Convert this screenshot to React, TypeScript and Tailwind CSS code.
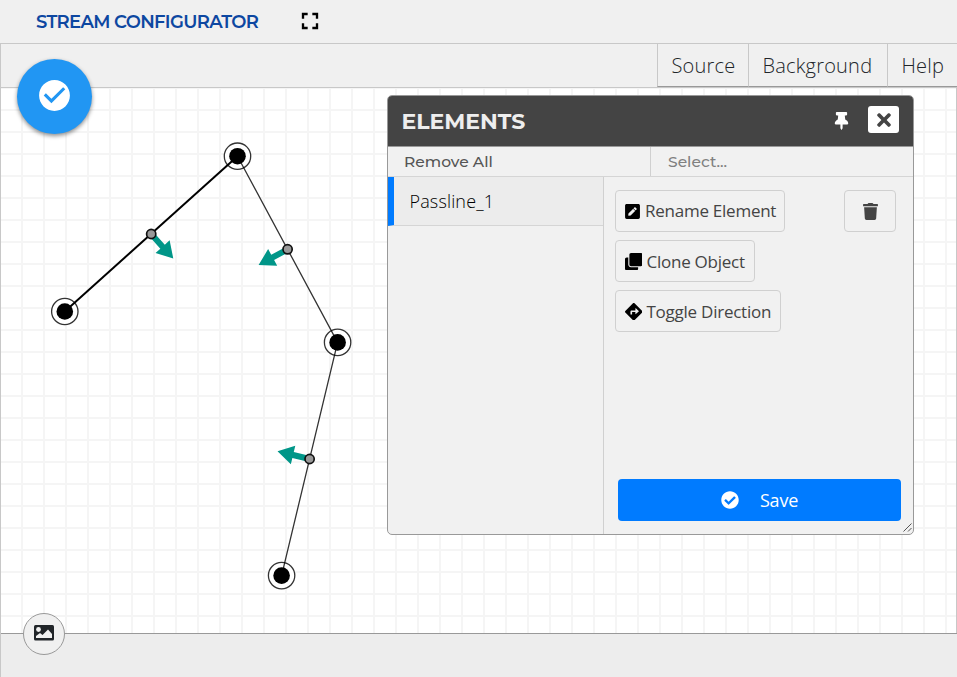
import React from "react";
import {
  MdFullscreen,
  MdCheckCircle,
} from "react-icons/md";
import {
  FaThumbtack,
  FaTimes,
  FaPenSquare,
  FaClone,
  FaDirections,
  FaTrash,
  FaCheckCircle,
} from "react-icons/fa";

type Point = { x: number; y: number };

const nodes: Point[] = [
  { x: 64.8, y: 311.5 },
  { x: 237.5, y: 156.2 },
  { x: 337.6, y: 342.4 },
  { x: 281.6, y: 575.6 },
];

const arrows: { from: Point; angle: number }[] = [
  { from: { x: 151.2, y: 234 }, angle: 48 },
  { from: { x: 287.6, y: 249.3 }, angle: 151.5 },
  { from: { x: 309.6, y: 459 }, angle: 193.5 },
];

function Drawing() {
  return (
    <svg className="block" width="955" height="545" viewBox="1 88 955 545">
      {nodes.map((n) => (
        <g key={n.y}>
          <circle cx={n.x} cy={n.y} r="13.2" fill="#fff" stroke="#333" strokeWidth="1.3" />
          <circle cx={n.x} cy={n.y} r="8.3" fill="#000" />
        </g>
      ))}
      <path d="M64.8 311.5L237.5 156.2" stroke="#000" strokeWidth="2" />
      <path d="M237.5 156.2L337.6 342.4L281.6 575.6" fill="none" stroke="#000" strokeOpacity="0.8" strokeWidth="1.3" />
      {arrows.map((a) => (
        <g key={a.angle}>
          <path
            transform={`translate(${a.from.x} ${a.from.y}) rotate(${a.angle})`}
            d="M0 -3H17V-9.5L33 0L17 9.5V3H0Z"
            fill="#009688"
          />
          <circle cx={a.from.x} cy={a.from.y} r="4.6" fill="#999" stroke="#111" strokeWidth="1.7" />
        </g>
      ))}
    </svg>
  );
}

const actionClass =
  "flex h-[42px] items-center rounded-[4px] border border-[#d0d0d0] text-[17px] tracking-[-0.25px] text-[#444] whitespace-nowrap";

const navClass =
  "flex h-[43px] items-center border-b border-l border-b-[#999] border-l-[#c8c8c8] pl-[13.5px] pt-[2px] font-light tracking-[0.2px]";

function ElementsPanel() {
  return (
    <section className="absolute left-[387px] top-[95px] flex h-[440px] w-[527px] flex-col overflow-hidden rounded-[5px] border border-[#999] bg-[#f0f0f0]/95">
      <header className="flex h-[51px] shrink-0 items-center border-b border-[#999] bg-[#444] pl-[13.5px] pr-[14px]">
        <h2 className="pt-[2px] font-['Montserrat','Open_Sans',sans-serif] text-[22px] font-bold leading-none text-[#eee]">
          ELEMENTS
        </h2>
        <FaThumbtack className="ml-auto h-[18px] w-[15px] text-white" />
        <button className="mb-[3px] ml-[19px] flex h-[27px] w-[31px] items-center justify-center rounded-[3px] bg-white text-[#444]">
          <FaTimes className="size-[20px]" />
        </button>
      </header>
      <div className="flex h-[30px] shrink-0 border-b border-[#d5d5d5] font-['Montserrat','Open_Sans',sans-serif] text-[15.5px] font-medium">
        <div className="flex w-[263px] items-center border-r border-[#d0d0d0] pl-[16px] pt-[1px] text-[#555]">
          Remove All
        </div>
        <div className="flex items-center pl-[17px] pt-[1px] text-[#808080]">
          Select...
        </div>
      </div>
      <div className="flex min-h-0 flex-1">
        <aside className="w-[216px] border-r border-[#d0d0d0]">
          <div className="flex h-[49px] items-center border-b border-l-[6px] border-b-[#d5d5d5] border-l-[#007bff] bg-[#ececec] pl-[15.5px] text-[18px] font-light tracking-[0.15px] text-black">
            Passline_1
          </div>
        </aside>
        <main className="flex flex-1 flex-col pb-[13px] pl-[11px] pr-[12px] pt-[13px]">
          <div className="flex items-start justify-between pr-[5px]">
            <div className="flex flex-col items-start gap-[8px]">
              <button className={`${actionClass} pl-[8px] pr-[8px]`}>
                <FaPenSquare className="mr-[4px] size-[17px] text-black" />
                Rename Element
              </button>
              <button className={`${actionClass} pl-[8.5px] pr-[9px] pt-[1px]`}>
                <FaClone className="mr-[4.5px] size-[17.5px] text-black" />
                Clone Object
              </button>
              <button className={`${actionClass} pl-[8.5px] pr-[9px] pt-[1px]`}>
                <FaDirections className="mr-[4.5px] size-[17.5px] text-black" />
                Toggle Direction
              </button>
            </div>
            <button className={`${actionClass} w-[52px] justify-center`}>
              <FaTrash className="size-[17px]" />
            </button>
          </div>
          <button className="ml-[3px] mt-auto flex h-[42px] items-center justify-center rounded-[4px] bg-[#007bff] text-[18px] tracking-[-0.2px] text-white">
            <FaCheckCircle className="mr-[21px] size-[18px]" />
            Save
          </button>
        </main>
      </div>
      <svg className="absolute bottom-[2px] right-[1px]" width="9" height="9" viewBox="0 0 9 9">
        <path d="M0.5 8.5L8.5 0.5M5 8.5L8.5 5" stroke="#555" strokeWidth="1" />
      </svg>
    </section>
  );
}

export default function App() {
  return (
    <div className="relative flex h-[677px] w-[957px] flex-col overflow-hidden bg-[#f0f0f0] font-['Open_Sans',sans-serif]">
      <header className="flex h-[43px] shrink-0 items-center pl-[36px]">
        <h1 className="w-[260px] whitespace-nowrap pt-[1px] font-['Montserrat','Open_Sans',sans-serif] text-[18px] font-semibold tracking-[-0.68px] text-[#0d47a1]">
          STREAM CONFIGURATOR
        </h1>
        <MdFullscreen className="mb-[1px] size-[28px] text-black" />
      </header>
      <div className="flex min-h-0 flex-1 flex-col border-l border-t border-[#c8c8c8]">
        <nav className="flex h-[44px] shrink-0 justify-end border-b border-[#c8c8c8] text-[20px] text-[#212529]">
          <button className={`${navClass} w-[91px]`}>Source</button>
          <button className={`${navClass} w-[139px]`}>Background</button>
          <button className={`${navClass} w-[70px]`}>Help</button>
        </nav>
        <div className="h-[545px] shrink-0 border-r border-[#c8c8c8] bg-white bg-[linear-gradient(to_right,#f5f5f5_2px,transparent_2px),linear-gradient(to_bottom,#f5f5f5_2px,transparent_2px)] bg-size-[22px_22px] bg-position-[20px_21px]">
          <Drawing />
        </div>
        <footer className="flex-1 border-t border-[#999] bg-[#ededed]" />
      </div>
      <button className="absolute left-[17px] top-[59px] flex size-[75px] items-center justify-center rounded-full bg-[#2196f3] pb-[2px] text-white shadow-[0_2px_4px_rgba(0,0,0,0.45)]">
        <MdCheckCircle className="size-[37px]" />
      </button>
      <ElementsPanel />
      <button className="absolute left-[23px] top-[613px] flex size-[42px] items-center justify-center rounded-full border border-[#999] bg-[#f0f0f0] pb-[3px]">
        <svg width="20" height="16" viewBox="0 0 20 16">
          <rect width="20" height="15.5" rx="1.5" fill="#212529" />
          <circle cx="4.5" cy="4.5" r="2.4" fill="#f0f0f0" />
          <path d="M2 13V11L6 8L8.5 10L14 4.5L18 9V13Z" fill="#f0f0f0" />
        </svg>
      </button>
    </div>
  );
}
